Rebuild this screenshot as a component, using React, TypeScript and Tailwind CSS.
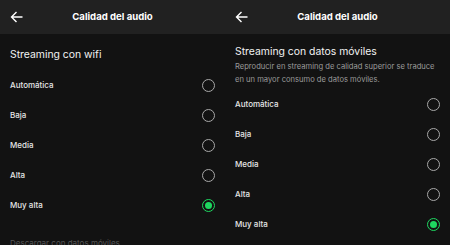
import React from "react";

const options = ["Automática", "Baja", "Media", "Alta", "Muy alta"];

const Radio = ({ checked }: { checked: boolean }) =>
  checked ? (
    <span className="flex h-[13px] w-[13px] items-center justify-center rounded-full border-[1.5px] border-[#1ed760]">
      <span className="h-[7px] w-[7px] rounded-full bg-[#1ed760]" />
    </span>
  ) : (
    <span className="h-[13px] w-[13px] rounded-full border-[1.5px] border-[#a8a8a8]" />
  );

const Header = () => (
  <div className="relative flex h-[34px] items-center justify-center bg-[#212121]">
    <svg
      className="absolute left-[10px] top-[11px]"
      width="13"
      height="12"
      viewBox="0 0 13 12"
      fill="none"
      stroke="#ffffff"
      strokeWidth="1.4"
    >
      <path d="M12.5 6H1.5M6.5 1L1.5 6l5 5" />
    </svg>
    <span className="text-[9.6px] font-bold text-white">Calidad del audio</span>
  </div>
);

const OptionList = () => (
  <div>
    {options.map((o) => (
      <div key={o} className="flex h-[30px] items-center justify-between pl-[10px] pr-[10px]">
        <span className="text-[8px] font-medium text-[#e6e6e6]">{o}</span>
        <Radio checked={o === "Muy alta"} />
      </div>
    ))}
  </div>
);

export default function App() {
  return (
    <div
      className="flex h-[245px] w-[450px] overflow-hidden bg-[#121212]"
      style={{ fontFamily: "Inter, 'Liberation Sans', sans-serif" }}
    >
      <div className="w-[225px]">
        <Header />
        <div className="pt-[14px]">
          <div className="px-[10px] text-[10.4px] leading-[14px] text-[#f2f2f2]">Streaming con wifi</div>
          <div className="mt-[8px]">
            <OptionList />
          </div>
          <div className="mt-[17px] px-[10px] text-[8px] text-[#555]">
            Descargar con datos móviles
          </div>
        </div>
      </div>
      <div className="w-[225px]">
        <Header />
        <div className="pt-[11px]">
          <div className="px-[10px] text-[10.4px] leading-[14px] text-[#f2f2f2]">
            Streaming con datos móviles
          </div>
          <div className="pl-[10px] pr-[6px] pt-[1px] text-[7.6px] leading-[13px] text-[#9a9a9a]">
            Reproducir en streaming de calidad superior se traduce en un mayor consumo de datos móviles.
          </div>
          <div className="mt-[3px]">
            <OptionList />
          </div>
        </div>
      </div>
    </div>
  );
}
